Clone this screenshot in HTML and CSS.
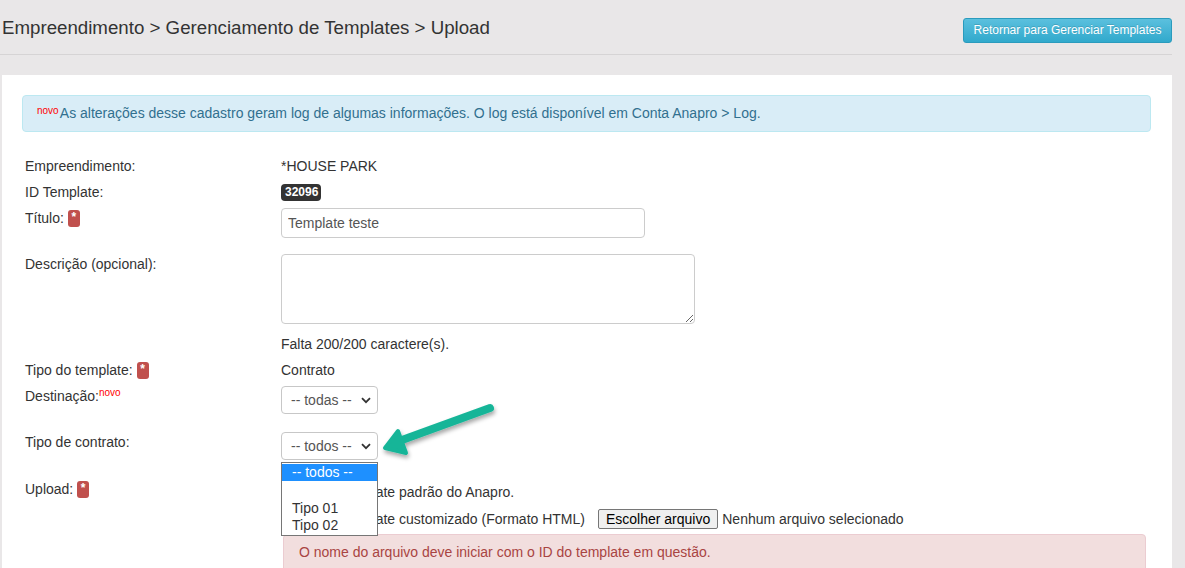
FILE: index.html
```html
<!DOCTYPE html>
<html lang="pt-BR">
<head>
  <meta charset="UTF-8">
  <title>Upload de Template</title>
  <link rel="stylesheet" href="styles.css">
</head>
<body>
  <div class="page">
    <div class="page-header">
      <h1>Empreendimento &gt; Gerenciamento de Templates &gt; Upload</h1>
      <a class="btn-info" href="#">Retornar para Gerenciar Templates</a>
    </div>

    <div class="panel">
      <div class="alert alert-info">
        <sup class="novo">novo</sup> As alterações desse cadastro geram log de algumas informações. O log está disponível em Conta Anapro &gt; Log.
      </div>

      <div class="form">
        <div class="row">
          <div class="label">Empreendimento:</div>
          <div class="value">*HOUSE PARK</div>
        </div>
        <div class="row">
          <div class="label">ID Template:</div>
          <div class="value"><span class="badge">32096</span></div>
        </div>
        <div class="row row-input">
          <div class="label">Título: <span class="req">*</span></div>
          <div class="value"><input class="text-input" type="text" value="Template teste"></div>
        </div>
        <div class="row row-area">
          <div class="label">Descrição (opcional):</div>
          <div class="value"><textarea class="text-area"></textarea></div>
        </div>
        <div class="row">
          <div class="label"></div>
          <div class="value">Falta 200/200 caractere(s).</div>
        </div>
        <div class="row">
          <div class="label">Tipo do template: <span class="req">*</span></div>
          <div class="value">Contrato</div>
        </div>
        <div class="row row-select">
          <div class="label">Destinação:<sup class="novo">novo</sup></div>
          <div class="value">
            <span class="select">-- todas --
              <svg class="chev" width="10" height="7" viewBox="0 0 10 7"><path d="M1 1.2 L5 5.2 L9 1.2" fill="none" stroke="#333" stroke-width="1.8"/></svg>
            </span>
          </div>
        </div>
        <div class="row row-contrato">
          <div class="label">Tipo de contrato:</div>
          <div class="value">
            <span class="select">-- todos --
              <svg class="chev" width="10" height="7" viewBox="0 0 10 7"><path d="M1 1.2 L5 5.2 L9 1.2" fill="none" stroke="#333" stroke-width="1.8"/></svg>
            </span>
            <ul class="dropdown">
              <li class="active">-- todos --</li>
              <li class="blank"></li>
              <li>Tipo 01</li>
              <li>Tipo 02</li>
            </ul>
          </div>
        </div>
        <div class="row row-upload">
          <div class="label">Upload: <span class="req">*</span></div>
          <div class="value">
            <div class="radio-line"><span class="radio"></span> Usar template padrão do Anapro.</div>
            <div class="radio-line"><span class="radio"></span> Usar template customizado (Formato HTML)
              <span class="file-btn">Escolher arquivo</span> Nenhum arquivo selecionado</div>
            <div class="alert alert-danger">O nome do arquivo deve iniciar com o ID do template em questão.</div>
          </div>
        </div>
      </div>
    </div>
  </div>

  <svg class="arrow" width="140" height="80" viewBox="0 0 140 80">
    <defs>
      <filter id="sh" x="-20%" y="-20%" width="140%" height="150%">
        <feDropShadow dx="1" dy="3" stdDeviation="2" flood-color="#000" flood-opacity="0.35"/>
      </filter>
    </defs>
    <g filter="url(#sh)" fill="#17b598" stroke="#17b598" stroke-linejoin="round" stroke-linecap="round">
      <line x1="118" y1="12" x2="30" y2="44" stroke-width="8"/>
      <polygon points="13,52 26,35 34,57" stroke-width="4"/>
    </g>
  </svg>
</body>
</html>
```

FILE: styles.css
```css
* { box-sizing: border-box; }
body {
  margin: 0;
  background: #e9e7e8;
  font-family: "Liberation Sans", Arial, sans-serif;
  font-size: 14px;
  color: #333;
  min-height: 568px;
  overflow: hidden;
}
.page {
  width: 1172px;
  padding-left: 2px;
}
.page-header {
  display: flex;
  justify-content: space-between;
  align-items: flex-start;
  padding-top: 18px;
  height: 55px;
  border-bottom: 1px solid #d6d4d5;
  margin-left: -2px;
  padding-left: 2px;
}
.page-header h1 {
  margin: -1px 0 0;
  font-size: 18.7px;
  font-weight: normal;
  line-height: 22px;
  color: #333;
}
.btn-info {
  display: block;
  width: 209px;
  height: 25px;
  line-height: 23px;
  text-align: center;
  font-size: 12px;
  color: #fff;
  text-decoration: none;
  background: linear-gradient(#5bc0de, #31a9cc);
  border: 1px solid #2a9bbd;
  border-radius: 3px;
  text-shadow: 0 -1px 0 rgba(0,0,0,0.15);
}

.panel {
  margin-top: 20px;
  background: #fff;
  padding: 20px 21px 0 20px;
  height: 500px;
}
.alert {
  border: 1px solid transparent;
  border-radius: 4px;
  line-height: 17px;
}
.alert-info {
  background: #d9edf7;
  border-color: #bce8f1;
  color: #31708f;
  padding: 9px 14px;
}
.novo {
  color: #f00;
  font-size: 10px;
  vertical-align: top;
  position: relative;
  top: -3px;
}
.alert-info .novo { margin-right: -2px; }

.form {
  padding: 24px 0 0 3px;
}
.row {
  display: grid;
  grid-template-columns: 256px 1fr;
  line-height: 20px;
  margin-bottom: 6px;
}
.row-input { margin-bottom: 16px; }
.row-area { margin-bottom: 10px; }
.row-select { margin-bottom: 18px; }
.row-contrato { margin-bottom: 19px; }

.badge {
  display: inline-block;
  background: #333;
  color: #fff;
  font-size: 12px;
  font-weight: bold;
  line-height: 17px;
  padding: 0 3px 0 4px;
  border-radius: 4px;
  vertical-align: middle;
  position: relative;
  top: -1px;
}
.req {
  display: inline-block;
  width: 12px;
  height: 17px;
  background: #c0504d;
  color: #fff;
  font-size: 12px;
  font-weight: bold;
  line-height: 15px;
  text-align: center;
  border-radius: 3px;
  vertical-align: middle;
  position: relative;
  top: -1px;
}
.text-input {
  width: 364px;
  height: 30px;
  border: 1px solid #ccc;
  border-radius: 4px;
  padding: 0 6px;
  font: 14px "Liberation Sans", Arial, sans-serif;
  color: #555;
  display: block;
}
.text-area {
  width: 414px;
  height: 70px;
  border: 1px solid #ccc;
  border-radius: 4px;
  display: block;
  resize: both;
}
.select {
  display: inline-block;
  position: relative;
  width: 97px;
  height: 28px;
  border: 1px solid #c7c7c7;
  border-radius: 4px;
  line-height: 26px;
  padding-left: 9px;
  color: #555;
  vertical-align: top;
}
.chev {
  position: absolute;
  right: 6px;
  top: 10px;
}
.row-contrato .value { position: relative; }
.dropdown {
  position: absolute;
  left: 0;
  top: 30px;
  width: 97px;
  margin: 0;
  padding: 1px 0 1px;
  list-style: none;
  background: #fff;
  border: 1px solid #767676;
  z-index: 5;
  line-height: 17px;
}
.dropdown li {
  padding-left: 10px;
  height: 17px;
  color: #333;
}
.dropdown li.blank { height: 19px; }
.dropdown li.active {
  background: #1e90ff;
  color: #fff;
}

.row-upload .value { padding-top: 3px; }
.radio-line {
  height: 20px;
  line-height: 20px;
  margin-bottom: 7px;
  display: flex;
  align-items: center;
  white-space: nowrap;
}
.radio-line + .radio-line { margin-bottom: 5px; }
.radio {
  display: inline-block;
  width: 13px;
  height: 13px;
  border: 1px solid #767676;
  border-radius: 50%;
  margin: 0 5px 0 9px;
}
.file-btn {
  display: inline-block;
  height: 20px;
  line-height: 18px;
  padding: 0 7px;
  margin: 0 4px 0 13px;
  background: #efefef;
  border: 1px solid #767676;
  border-radius: 2px;
  color: #000;
}
.alert-danger {
  margin-left: 2px;
  width: 863px;
  background: #f2dede;
  border-color: #ebccd1;
  color: #a94442;
  padding: 9px 15px 15px;
}

.arrow {
  position: absolute;
  left: 372px;
  top: 396px;
  overflow: visible;
}
```
